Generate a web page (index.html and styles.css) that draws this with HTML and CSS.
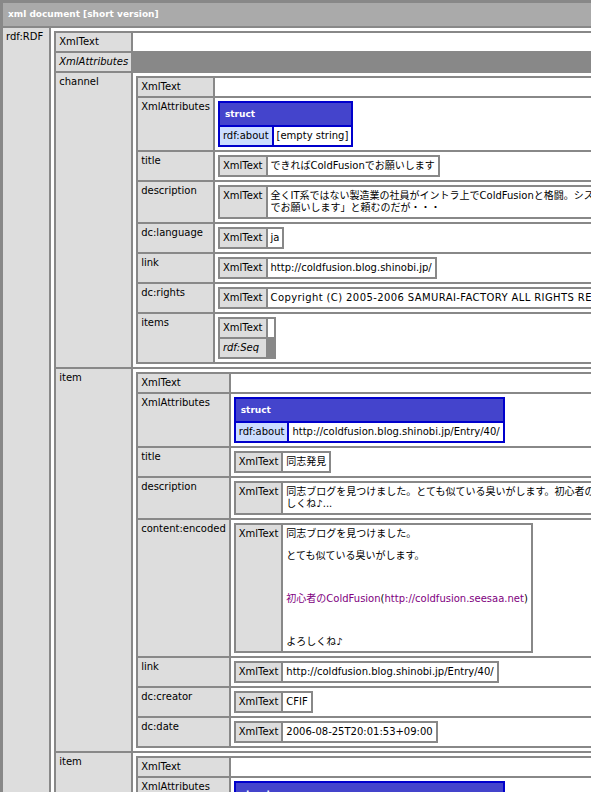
FILE: index.html
```html
<!DOCTYPE html>
<html lang="ja">
<head>
<meta charset="utf-8">
<title>xml document [short version]</title>
<link rel="stylesheet" href="styles.css">
</head>
<body>
<table class="dump dump-root">
  <tr><th colspan="2" class="dump-head">xml document [short version]</th></tr>
  <tr>
    <td class="key key-root">rdf:RDF</td>
    <td class="val">
      <table class="dump">
        <tr><td class="key">XmlText</td><td class="val"></td></tr>
        <tr><td class="key key-attr">XmlAttributes</td><td class="val val-empty"></td></tr>
        <tr>
          <td class="key">channel</td>
          <td class="val">
            <table class="dump">
              <tr><td class="key">XmlText</td><td class="val"></td></tr>
              <tr>
                <td class="key">XmlAttributes</td>
                <td class="val">
                  <table class="struct">
                    <tr><th colspan="2" class="struct-head">struct</th></tr>
                    <tr><td class="skey">rdf:about</td><td class="sval">[empty string]</td></tr>
                  </table>
                </td>
              </tr>
              <tr>
                <td class="key">title</td>
                <td class="val"><table class="dump"><tr><td class="key">XmlText</td><td class="val">できればColdFusionでお願いします</td></tr></table></td>
              </tr>
              <tr>
                <td class="key">description</td>
                <td class="val"><table class="dump"><tr><td class="key">XmlText</td><td class="val">全くIT系ではない製造業の社員がイントラ上でColdFusionと格闘。システム部門には「ColdFusion<br>でお願いします」と頼むのだが・・・</td></tr></table></td>
              </tr>
              <tr>
                <td class="key">dc:language</td>
                <td class="val"><table class="dump"><tr><td class="key">XmlText</td><td class="val">ja</td></tr></table></td>
              </tr>
              <tr>
                <td class="key">link</td>
                <td class="val"><table class="dump"><tr><td class="key">XmlText</td><td class="val">http://coldfusion.blog.shinobi.jp/</td></tr></table></td>
              </tr>
              <tr>
                <td class="key">dc:rights</td>
                <td class="val"><table class="dump"><tr><td class="key">XmlText</td><td class="val val-wide">Copyright (C) 2005-2006 SAMURAI-FACTORY ALL RIGHTS RESERVED.</td></tr></table></td>
              </tr>
              <tr>
                <td class="key">items</td>
                <td class="val">
                  <table class="dump">
                    <tr><td class="key">XmlText</td><td class="val"></td></tr>
                    <tr><td class="key key-attr">rdf:Seq</td><td class="val val-empty"></td></tr>
                  </table>
                </td>
              </tr>
            </table>
          </td>
        </tr>
        <tr>
          <td class="key">item</td>
          <td class="val">
            <table class="dump">
              <tr><td class="key">XmlText</td><td class="val"></td></tr>
              <tr>
                <td class="key">XmlAttributes</td>
                <td class="val">
                  <table class="struct">
                    <tr><th colspan="2" class="struct-head">struct</th></tr>
                    <tr><td class="skey">rdf:about</td><td class="sval">http://coldfusion.blog.shinobi.jp/Entry/40/</td></tr>
                  </table>
                </td>
              </tr>
              <tr>
                <td class="key">title</td>
                <td class="val"><table class="dump"><tr><td class="key">XmlText</td><td class="val">同志発見</td></tr></table></td>
              </tr>
              <tr>
                <td class="key">description</td>
                <td class="val"><table class="dump"><tr><td class="key">XmlText</td><td class="val">同志ブログを見つけました。とても似ている臭いがします。初心者のColdFusion(http://coldfusion.seesaa.net)よろ<br>しくね♪...</td></tr></table></td>
              </tr>
              <tr>
                <td class="key">content:encoded</td>
                <td class="val">
                  <table class="dump">
                    <tr>
                      <td class="key">XmlText</td>
                      <td class="val">
                        <div class="line">同志ブログを見つけました。</div>
                        <div class="line gap-s">とても似ている臭いがします。</div>
                        <div class="line gap-l"><a class="link" href="#">初心者のColdFusion</a>(<a class="link" href="#">http://coldfusion.seesaa.net</a>)</div>
                        <div class="line gap-l">よろしくね♪</div>
                      </td>
                    </tr>
                  </table>
                </td>
              </tr>
              <tr>
                <td class="key">link</td>
                <td class="val"><table class="dump"><tr><td class="key">XmlText</td><td class="val">http://coldfusion.blog.shinobi.jp/Entry/40/</td></tr></table></td>
              </tr>
              <tr>
                <td class="key">dc:creator</td>
                <td class="val"><table class="dump"><tr><td class="key">XmlText</td><td class="val">CFIF</td></tr></table></td>
              </tr>
              <tr>
                <td class="key">dc:date</td>
                <td class="val"><table class="dump"><tr><td class="key">XmlText</td><td class="val">2006-08-25T20:01:53+09:00</td></tr></table></td>
              </tr>
            </table>
          </td>
        </tr>
        <tr>
          <td class="key">item</td>
          <td class="val">
            <table class="dump">
              <tr><td class="key">XmlText</td><td class="val"></td></tr>
              <tr>
                <td class="key">XmlAttributes</td>
                <td class="val">
                  <table class="struct">
                    <tr><th colspan="2" class="struct-head">struct</th></tr>
                    <tr><td class="skey">rdf:about</td><td class="sval">http://coldfusion.blog.shinobi.jp/Entry/39/</td></tr>
                  </table>
                </td>
              </tr>
              <tr>
                <td class="key">title</td>
                <td class="val"><table class="dump"><tr><td class="key">XmlText</td><td class="val">ColdFusionでRSSを読み込む</td></tr></table></td>
              </tr>
              <tr>
                <td class="key">description</td>
                <td class="val"><table class="dump"><tr><td class="key">XmlText</td><td class="val">CFHTTPでRSSを取得して、XmlParseで解析してみました。CFDUMPで中身を確認すると構造がよくわかります。<br>便利です...</td></tr></table></td>
              </tr>
              <tr>
                <td class="key">content:encoded</td>
                <td class="val">
                  <table class="dump">
                    <tr>
                      <td class="key">XmlText</td>
                      <td class="val">
                        <div class="line">CFHTTPでRSSを取得して、XmlParseで解析してみました。</div>
                        <div class="line gap-s">CFDUMPで中身を確認すると構造がよくわかります。</div>
                      </td>
                    </tr>
                  </table>
                </td>
              </tr>
              <tr>
                <td class="key">link</td>
                <td class="val"><table class="dump"><tr><td class="key">XmlText</td><td class="val">http://coldfusion.blog.shinobi.jp/Entry/39/</td></tr></table></td>
              </tr>
              <tr>
                <td class="key">dc:creator</td>
                <td class="val"><table class="dump"><tr><td class="key">XmlText</td><td class="val">CFIF</td></tr></table></td>
              </tr>
              <tr>
                <td class="key">dc:date</td>
                <td class="val"><table class="dump"><tr><td class="key">XmlText</td><td class="val">2006-08-24T21:12:05+09:00</td></tr></table></td>
              </tr>
            </table>
          </td>
        </tr>
      </table>
    </td>
  </tr>
</table>
</body>
</html>
```
FILE: styles.css
```css
html {
  overflow: hidden;
}

body {
  margin: 0;
  font-family: "DejaVu Sans", "Noto Sans CJK JP", sans-serif;
  font-size: 10px;
  line-height: 12px;
  color: #000;
  background: #fff;
}

table {
  border-collapse: separate;
  border-spacing: 2px;
  font-size: 10px;
  line-height: 12px;
}

.dump {
  background: #888888;
}

.dump-root {
  border: 1px solid #888888;
}

.dump-head {
  background: #aaaaaa;
  color: #ffffff;
  font-size: 9px;
  font-weight: bold;
  text-align: left;
  padding: 5px;
  line-height: 13px;
}

.key {
  background: #dddddd;
  padding: 3px;
  vertical-align: top;
  white-space: nowrap;
}

.key-root {
  padding-right: 6px;
}

.key-attr {
  font-style: italic;
}

.val {
  background: #ffffff;
  padding: 3px;
  vertical-align: top;
  white-space: nowrap;
}

.val-wide {
  letter-spacing: 0.4px;
}

.val-empty {
  background: transparent;
}

.struct {
  background: #0000cc;
}

.struct-head {
  background: #4444cc;
  color: #ffffff;
  font-size: 9px;
  font-weight: bold;
  text-align: left;
  padding: 5px;
  line-height: 12px;
}

.skey {
  background: #ccddff;
  padding: 3px;
  vertical-align: top;
  white-space: nowrap;
}

.sval {
  background: #ffffff;
  padding: 3px;
  vertical-align: top;
  white-space: nowrap;
}

.gap-s {
  margin-top: 10px;
}

.gap-l {
  margin-top: 31px;
}

.link {
  color: #800080;
  text-decoration: none;
}
```
